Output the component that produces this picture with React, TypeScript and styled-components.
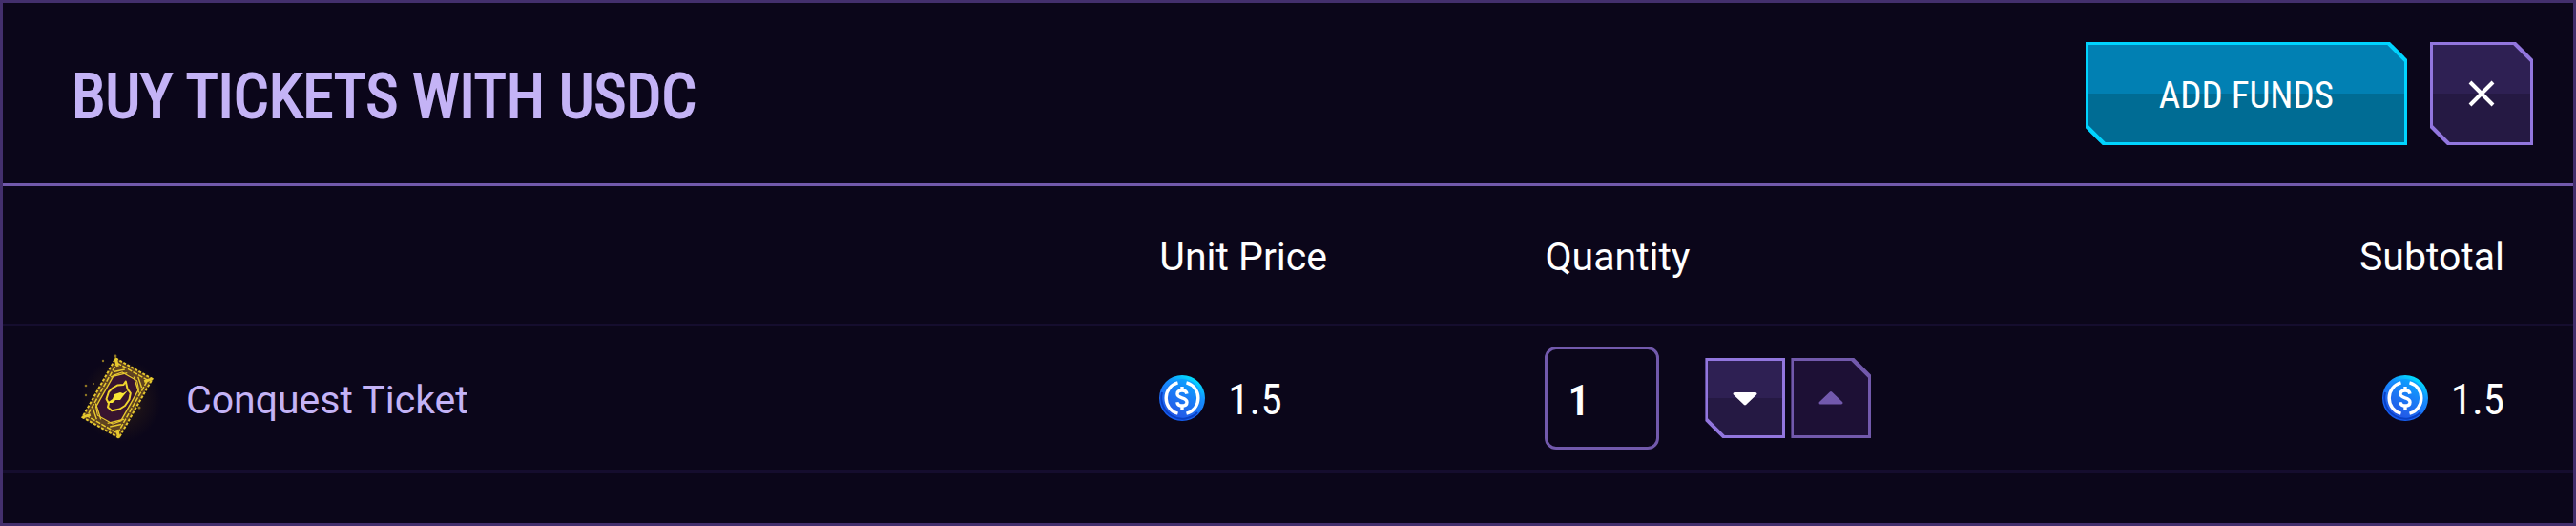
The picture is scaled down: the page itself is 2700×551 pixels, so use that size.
import React, { useState } from "react";
import styled, { createGlobalStyle } from "styled-components";

const colors = {
  page: "#0b061a",
  frame: "#432f6d",
  divider: "#7259ac",
  rowLine: "#150d2e",
  lilac: "#c4b3f6",
  white: "#ffffff",
};

const condensed = `"Roboto Condensed", "Liberation Sans Narrow", "Liberation Sans", sans-serif`;
const body = `Roboto, "Liberation Sans", sans-serif`;

const GlobalStyle = createGlobalStyle`
  *, *::before, *::after { box-sizing: border-box; }
  body { margin: 0; background: ${colors.page}; font-family: ${body}; }
`;

const Dialog = styled.section`
  min-height: 100vh;
  border: 3px solid ${colors.frame};
  background: ${colors.page};
  color: ${colors.white};
`;

const Header = styled.header`
  display: flex;
  align-items: center;
  justify-content: space-between;
  padding: 41px 42px 40px 72px;
  border-bottom: 3px solid ${colors.divider};
`;

const Title = styled.h1`
  margin: 0;
  padding-top: 6px;
  font: 400 65px/80px ${condensed};
  color: ${colors.lilac};
  text-transform: uppercase;
  -webkit-text-stroke: 2px ${colors.lilac};
`;

const Actions = styled.div`
  display: flex;
  gap: 24px;
`;

type Tone = "primary" | "secondary" | "muted";

const tones: Record<Tone, { edge: string; top: string; bottom: string; text: string }> = {
  primary: { edge: "#00d4ff", top: "#0180b3", bottom: "#006c94", text: "#ffffff" },
  secondary: { edge: "#9276de", top: "#2e2053", bottom: "#251943", text: "#ffffff" },
  muted: { edge: "#7259ac", top: "#1d1035", bottom: "#1d1035", text: "#7259ac" },
};

const cutShape = {
  both: "polygon(0 0, calc(100% - 18px) 0, 100% 18px, 100% 100%, 18px 100%, 0 calc(100% - 18px))",
  lower: "polygon(0 0, 100% 0, 100% 100%, 18px 100%, 0 calc(100% - 18px))",
  upper: "polygon(0 0, calc(100% - 18px) 0, 100% 18px, 100% 100%, 0 100%)",
};

const CutButton = styled.button<{ $tone: Tone; $cut: keyof typeof cutShape; $size: number }>`
  display: inline-flex;
  align-items: center;
  justify-content: center;
  flex: none;
  height: ${(p) => p.$size}px;
  min-width: ${(p) => p.$size}px;
  padding: 0;
  border: 3px solid ${(p) => tones[p.$tone].edge};
  color: ${(p) => tones[p.$tone].text};
  clip-path: ${(p) => cutShape[p.$cut]};
  background:
    linear-gradient(45deg, ${(p) => (p.$cut === "upper" ? "transparent" : tones[p.$tone].edge)} 12px, transparent 13px),
    linear-gradient(225deg, ${(p) => (p.$cut === "lower" ? "transparent" : tones[p.$tone].edge)} 12px, transparent 13px),
    linear-gradient(${(p) => tones[p.$tone].top} 50%, ${(p) => tones[p.$tone].bottom} 50%);
  cursor: pointer;

  &:disabled { cursor: default; }
`;

const FundsButton = styled(CutButton)`
  padding: 4px 74px 0;
  font: 400 39px/48px ${condensed};
  text-transform: uppercase;
`;

const Table = styled.table`
  width: 100%;
  table-layout: fixed;
  border-collapse: separate;
  border-spacing: 0;
`;

const Column = styled.col<{ $share: number }>`
  width: ${(p) => p.$share}%;
`;

const HeadCell = styled.th<{ $end?: boolean }>`
  height: 147px;
  padding: 4px ${(p) => (p.$end ? 72 : 0)}px 0 0;
  border-bottom: 3px solid ${colors.rowLine};
  font: 400 41px/48px ${body};
  text-align: ${(p) => (p.$end ? "right" : "left")};
`;

const Cell = styled.td<{ $start?: boolean; $end?: boolean }>`
  height: 153px;
  padding: 0 ${(p) => (p.$end ? 72 : 0)}px 0 ${(p) => (p.$start ? 72 : 0)}px;
  border-bottom: 3px solid ${colors.rowLine};
`;

const Line = styled.div<{ $end?: boolean }>`
  display: flex;
  align-items: center;
  justify-content: ${(p) => (p.$end ? "flex-end" : "flex-start")};
  gap: 24px;
`;

const ItemName = styled.span`
  padding-top: 4px;
  font: 400 41px/48px ${body};
  color: ${colors.lilac};
`;

const Amount = styled.span`
  padding-top: 4px;
  font: 400 45px/56px ${condensed};
`;

const QuantityControl = styled.div`
  display: flex;
  align-items: center;
  gap: 48px;
`;

const QuantityInput = styled.input`
  width: 120px;
  height: 108px;
  padding: 4px 21px 0;
  border: 3px solid ${colors.divider};
  border-radius: 12px;
  background: transparent;
  color: ${colors.white};
  font: 600 45px/56px ${condensed};
  outline: none;
`;

const Steppers = styled.div`
  display: flex;
  gap: 6px;
`;

const Icon = styled.svg`
  display: block;
  flex: none;
`;

function CloseIcon() {
  return (
    <Icon width="32" height="32" viewBox="0 0 32 32" fill="none" stroke="currentColor" strokeWidth="4" aria-hidden="true">
      <path d="M4 4 28 28M28 4 4 28" />
    </Icon>
  );
}

function Arrow({ up = false }: { up?: boolean }) {
  return (
    <Icon width="28" height="18" viewBox="0 0 28 18" fill="currentColor" stroke="currentColor" strokeWidth="3" strokeLinejoin="round" aria-hidden="true">
      <path d={up ? "M3 14 14 3.5 25 14Z" : "M3 4.5 14 15 25 4.5Z"} />
    </Icon>
  );
}

function Coin() {
  return (
    <Icon width="48" height="48" viewBox="0 0 48 48" fill="none" role="img" aria-label="USDC">
      <defs>
        <linearGradient id="coinRim" x1="38" y1="3" x2="14" y2="46" gradientUnits="userSpaceOnUse">
          <stop offset="0" stopColor="#00e4ff" />
          <stop offset=".32" stopColor="#1590ff" />
          <stop offset=".7" stopColor="#1d6cf6" />
          <stop offset="1" stopColor="#1459ee" />
        </linearGradient>
        <linearGradient id="coinFace" x1="36" y1="8" x2="16" y2="42" gradientUnits="userSpaceOnUse">
          <stop offset="0" stopColor="#0aa4ff" />
          <stop offset=".45" stopColor="#1b7cf6" />
          <stop offset="1" stopColor="#2458e6" />
        </linearGradient>
      </defs>
      <circle cx="24" cy="24" r="24" fill="url(#coinRim)" />
      <path d="M3 18A22 22 0 0 0 40 39" stroke="#0b3fc2" strokeWidth="2" />
      <circle cx="24" cy="24" r="20" fill="url(#coinFace)" />
      <g stroke="#fff" strokeWidth="3.4">
        <path d="M19.5 7.8A16.8 16.8 0 0 0 19.5 40.2" />
        <path d="M28.5 7.8A16.8 16.8 0 0 1 28.5 40.2" />
        <path d="M29 19.6C28.6 17.2 26.8 16 24 16 21 16 19 17.4 19 19.8 19 25 29 22.6 29 28.2 29 30.6 27 32 24 32 21 32 19.2 30.8 18.8 28.2" />
        <path d="M24 12V16M24 32V36" />
      </g>
    </Icon>
  );
}

function Ticket() {
  return (
    <Icon width="96" height="96" viewBox="0 0 96 96" fill="none" aria-hidden="true">
      <defs>
        <radialGradient id="glow">
          <stop offset="0" stopColor="#8a5f12" stopOpacity=".35" />
          <stop offset=".6" stopColor="#5c3f10" stopOpacity=".16" />
          <stop offset="1" stopColor="#5c3f10" stopOpacity="0" />
        </radialGradient>
      </defs>
      <ellipse cx="52" cy="50" rx="42" ry="44" fill="url(#glow)" />
      <g transform="translate(48 48) rotate(29.5)">
        <rect x="-22" y="-35.5" width="44" height="71" fill="#5f4220" />
        <path d="M-10-27H10L15-20V20L10 27H-10L-15 20V-20Z" fill="#38142f" />
        <g stroke="#e6c82e">
          <rect x="-22" y="-35.5" width="44" height="71" strokeWidth="2" strokeDasharray="3 1.6" />
          <rect x="-18.4" y="-32" width="36.8" height="64" strokeWidth="1.5" strokeDasharray="5 1.4" />
          <path d="M-9-26H9L15-19V19L9 26H-9L-15 19V-19Z" strokeWidth="1.3" />
          <path d="M-17-22-8-30M-17-16-4-28M17-22 8-30M17-16 4-28M-17 22-8 30M-17 16-4 28M17 22 8 30M17 16 4 28" strokeWidth="1.4" />
          <path d="M-22-35.5-16-29M22-35.5 16-29M-22 35.5-16 29M22 35.5 16 29" strokeWidth="3" />
        </g>
      </g>
      <path d="M56.8 30.5 54.5 34 48.5 34.4 43 37.5 39 41.5 36.5 49 39 53.5 38 57.5 42.2 61.2 50.5 59.5 56 56 60.5 49.5 61.8 42.8 58.6 38.5Z" stroke="#f0d42d" strokeWidth="2" strokeLinejoin="round" />
      <path d="M37 53 43 49 45 44 51 42 54 43 59 40 54 46 51 50 46 50 43 53Z" fill="#f9e534" />
      <g fill="#8d7423">
        <circle cx="33" cy="9" r="1.2" />
        <circle cx="15" cy="35" r="1.3" />
        <circle cx="23" cy="33" r="1" />
        <circle cx="15" cy="45" r="1.2" />
        <circle cx="46" cy="4" r="1.4" />
        <circle cx="71" cy="58" r="1.5" />
      </g>
    </Icon>
  );
}

const UNIT_PRICE = 1.5;
const MIN_QUANTITY = 0;
const MAX_QUANTITY = 1;

export default function App() {
  const [quantity, setQuantity] = useState(1);

  const update = (next: number) => {
    if (!Number.isNaN(next)) {
      setQuantity(Math.min(MAX_QUANTITY, Math.max(MIN_QUANTITY, next)));
    }
  };

  return (
    <>
      <GlobalStyle />
      <Dialog aria-labelledby="dialog-title">
        <Header>
          <Title id="dialog-title">Buy tickets with USDC</Title>
          <Actions>
            <FundsButton type="button" $tone="primary" $cut="both" $size={108}>
              Add funds
            </FundsButton>
            <CutButton type="button" $tone="secondary" $cut="both" $size={108} aria-label="Close">
              <CloseIcon />
            </CutButton>
          </Actions>
        </Header>
        <Table>
          <colgroup>
            <Column $share={45} />
            <Column $share={15} />
            <Column $share={20} />
            <Column $share={20} />
          </colgroup>
          <thead>
            <tr>
              <HeadCell aria-label="Item" />
              <HeadCell scope="col">Unit Price</HeadCell>
              <HeadCell scope="col">Quantity</HeadCell>
              <HeadCell scope="col" $end>Subtotal</HeadCell>
            </tr>
          </thead>
          <tbody>
            <tr>
              <Cell $start>
                <Line>
                  <Ticket />
                  <ItemName>Conquest Ticket</ItemName>
                </Line>
              </Cell>
              <Cell>
                <Line>
                  <Coin />
                  <Amount>{UNIT_PRICE}</Amount>
                </Line>
              </Cell>
              <Cell>
                <QuantityControl>
                  <QuantityInput
                    type="text"
                    inputMode="numeric"
                    aria-label="Quantity"
                    value={quantity}
                    onChange={(e) => update(parseInt(e.target.value, 10))}
                  />
                  <Steppers>
                    <CutButton
                      type="button"
                      $tone={quantity > MIN_QUANTITY ? "secondary" : "muted"}
                      $cut="lower"
                      $size={84}
                      aria-label="Decrease quantity"
                      disabled={quantity <= MIN_QUANTITY}
                      onClick={() => update(quantity - 1)}
                    >
                      <Arrow />
                    </CutButton>
                    <CutButton
                      type="button"
                      $tone={quantity < MAX_QUANTITY ? "secondary" : "muted"}
                      $cut="upper"
                      $size={84}
                      aria-label="Increase quantity"
                      disabled={quantity >= MAX_QUANTITY}
                      onClick={() => update(quantity + 1)}
                    >
                      <Arrow up />
                    </CutButton>
                  </Steppers>
                </QuantityControl>
              </Cell>
              <Cell $end>
                <Line $end>
                  <Coin />
                  <Amount>{UNIT_PRICE * quantity}</Amount>
                </Line>
              </Cell>
            </tr>
          </tbody>
        </Table>
      </Dialog>
    </>
  );
}
